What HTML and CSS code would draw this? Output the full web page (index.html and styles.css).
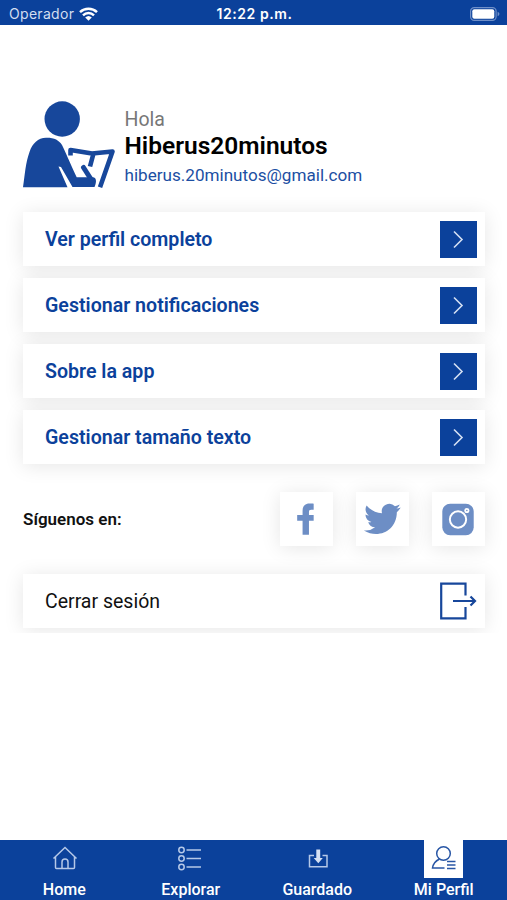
FILE: index.html
```html
<!DOCTYPE html>
<html lang="es">
<head>
    <meta charset="UTF-8">
    <meta name="viewport" content="width=device-width, initial-scale=1.0">
    <title>Mi Perfil</title>
    <link rel="stylesheet" href="styles.css">
</head>
<body>
    <header class="status-bar">
        <div class="carrier">
            <span>Operador</span>
            <svg class="wifi" viewBox="0 0 19 14" width="19" height="14">
                <path d="M1 5.2a12.3 12.3 0 0 1 17 0M4 8.3a8 8 0 0 1 11 0" fill="none" stroke="#fff" stroke-width="2.5"/>
                <path d="M6.2 10.5a4.8 4.8 0 0 1 6.6 0L9.5 13.8z" fill="#fff"/>
            </svg>
        </div>
        <span class="time">12:22 p.m.</span>
        <svg class="battery" viewBox="0 0 31 14" width="31" height="14">
            <rect x="1.6" y=".6" width="25.5" height="12.8" rx="3.6" fill="none" stroke="#6f8fc8" stroke-width="1.2"/>
            <rect x="3.3" y="2.3" width="22" height="9.4" rx="2" fill="#fff"/>
            <path d="M28.6 4.8c2.4.8 2.4 3.6 0 4.4z" fill="#6f8fc8"/>
        </svg>
    </header>

    <main class="content">
        <section class="profile">
            <svg class="avatar" viewBox="0 0 92 88" width="92" height="88">
                <circle cx="39.2" cy="18" r="17.7"/>
                <path d="M0 86.3C2 73 2.5 62 6.5 51 9.500 42 15 37 23 36.7c8-.2 13 2.3 16 7.3 3 6 8 18 14.7 32.2H70c3 0 4.2 4 1.500 9.8H49.500L38 66l-2.500-.5 9 20.8z"/>
                <path d="M47.5 54.500v-5.500l21.500 3.500 20.500-2L77 86.300M70.5 52.500l-3.500 13" class="book"/>
                <path d="M60.5 66.500l8 12.500" class="arm"/>
            </svg>
            <div class="profile-text">
                <p class="hello">Hola</p>
                <h1 class="name">Hiberus20minutos</h1>
                <p class="email">hiberus.20minutos@gmail.com</p>
            </div>
        </section>

        <nav class="options">
            <a class="card option">
                <span>Ver perfil completo</span>
                <svg class="arrow" viewBox="0 0 37 37"><path d="M14 10.500l8 8-8 8"/></svg>
            </a>
            <a class="card option">
                <span>Gestionar notificaciones</span>
                <svg class="arrow" viewBox="0 0 37 37"><path d="M14 10.500l8 8-8 8"/></svg>
            </a>
            <a class="card option">
                <span>Sobre la app</span>
                <svg class="arrow" viewBox="0 0 37 37"><path d="M14 10.500l8 8-8 8"/></svg>
            </a>
            <a class="card option">
                <span>Gestionar tamaño texto</span>
                <svg class="arrow" viewBox="0 0 37 37"><path d="M14 10.500l8 8-8 8"/></svg>
            </a>
        </nav>

        <section class="social">
            <h2 class="social-title">Síguenos en:</h2>
            <div class="social-links">
                <a class="card social-link">
                    <svg viewBox="0 0 54 54"><path d="M34.300 11v6h-2.500c-1.800 0-2.300.8-2.300 2.300v3h4.800v6h-4.800V42.500h-6.500V28.300H17.500v-6h5.500v-4c0-4.800 2.500-7.500 7-7.500 2 0 3.300.1 4.300.2z"/></svg>
                </a>
                <a class="card social-link">
                    <svg viewBox="0 0 54 54"><path d="M45.500 14.700c-1.400.6-2.800 1-4.300 1.200 1.600-1 2.700-2.300 3.300-4.100-1.500.9-3.100 1.500-4.800 1.800a7.700 7.700 0 0 0-13.200 7c-6.300-.3-11.900-3.300-15.700-7.900-2.200 3.900-.9 8 2.300 10.200-1.200 0-2.400-.4-3.400-.9 0 3.900 2.600 6.900 6.100 7.600-1.100.3-2.300.3-3.400.1 1 3 3.700 5.200 7.100 5.300A15.500 15.500 0 0 1 8 38.200c15 9 33.600.2 33.600-18.600 1.600-1.200 2.900-2.900 3.900-4.900z"/></svg>
                </a>
                <a class="card social-link">
                    <svg viewBox="0 0 54 54">
                        <rect x="10.500" y="11" width="32" height="32" rx="8"/>
                        <circle cx="26.500" cy="27" r="8.300" class="lens"/>
                        <circle cx="35.500" cy="17.800" r="2.600" fill="#fff"/>
                        <circle cx="35.500" cy="17.800" r=".8"/>
                    </svg>
                </a>
            </div>
        </section>

        <a class="card logout">
            <span>Cerrar sesión</span>
            <svg class="logout-icon" viewBox="0 0 37 38" width="37" height="38">
                <path d="M25.500 13.500V1.700H1.200v34.600h24.300V25M13 19h22M30.500 14.500L35 19l-4.500 4.500"/>
            </svg>
        </a>
    </main>

    <nav class="tab-bar">
        <a class="tab">
            <span class="tab-icon">
                <svg viewBox="0 0 39 38"><path d="M8.500 18.500L20 7.500l11.500 11M10.500 17v10.500q0 1 1 1h17q1 0 1-1V17M17 28.500v-6.500a3 3 0 0 1 6 0v6.500"/></svg>
            </span>
            <span class="tab-label">Home</span>
        </a>
        <a class="tab">
            <span class="tab-icon">
                <svg viewBox="0 0 39 38">
                    <circle cx="10.500" cy="10" r="2.700"/><circle cx="10.500" cy="18.500" r="2.700"/><circle cx="10.500" cy="27" r="2.700"/>
                    <path d="M15.500 10H30M15.500 18.500H30M15.500 27H30"/>
                </svg>
            </span>
            <span class="tab-label">Explorar</span>
        </a>
        <a class="tab">
            <span class="tab-icon">
                <svg viewBox="0 0 39 38">
                    <path d="M16 15.500H11.500v11.300h17.500V15.500H24.500"/>
                    <path d="M18.300 9.500h3.900v8.500h2.600l-4.500 5.200-4.600-5.200h2.600z" class="solid"/>
                </svg>
            </span>
            <span class="tab-label">Guardado</span>
        </a>
        <a class="tab active">
            <span class="tab-icon">
                <svg viewBox="0 0 39 38">
                    <circle cx="19.500" cy="13.500" r="6.800"/>
                    <path d="M15.500 19c-4 2-6.500 5-7 9h12M23 21.500h8.500M23 25h8.500M23 28.500h8.500"/>
                </svg>
            </span>
            <span class="tab-label">Mi Perfil</span>
        </a>
    </nav>
</body>
</html>
```
FILE: styles.css
```css
* {
    box-sizing: border-box;
}
body {
    margin: 0;
    height: 900px;
    display: flex;
    flex-direction: column;
    background: #fff;
    color: #111;
    font-family: Roboto, "Liberation Sans", sans-serif;
}
h1, h2, p {
    margin: 0;
}

/* Status bar */
.status-bar {
    height: 25px;
    padding: 2px 7px 0 9px;
    display: grid;
    grid-template-columns: 1fr auto 1fr;
    align-items: center;
    background: #0b419b;
    color: #fff;
    font-family: Inter, sans-serif;
    font-size: 14px;
}
.carrier {
    display: flex;
    align-items: center;
    gap: 5px;
    color: #d3def0;
    letter-spacing: 0.3px;
}
.time {
    font-weight: 600;
    letter-spacing: 0.55px;
}
.battery {
    justify-self: end;
}

/* Content */
.content {
    height: 608px;
    padding: 75px 22px 0 23px;
    overflow: hidden;
    isolation: isolate;
}
.profile {
    display: flex;
    gap: 9.5px;
    height: 112px;
}
.avatar {
    margin-top: 1px;
    fill: #17479b;
}
.avatar .book,
.avatar .arm {
    fill: none;
    stroke: #17479b;
    stroke-width: 4.6;
    stroke-linejoin: round;
}
.avatar .arm {
    stroke-width: 5;
    stroke-linecap: round;
}
.profile-text {
    padding-top: 7px;
}
.hello {
    font-size: 19.5px;
    line-height: 25px;
    color: #777;
}
.name {
    font-size: 24.5px;
    line-height: 28px;
    font-weight: 600;
    color: #000;
}
.email {
    margin-top: 3px;
    font-size: 17.1px;
    line-height: 24px;
    color: #1c4fa3;
}
.card {
    position: relative;
    height: 54px;
    display: flex;
    align-items: center;
    background: #fff;
}
/* shadow sits under every card, so neighbours stay white */
.card::before {
    content: "";
    position: absolute;
    inset: 0;
    z-index: -1;
    box-shadow: 0 2px 20px rgba(0, 0, 0, 0.1);
}
.options {
    display: flex;
    flex-direction: column;
    gap: 12px;
}
.option {
    justify-content: space-between;
    padding: 0 8px 0 22px;
    font-size: 19.6px;
    font-weight: 600;
    color: #0b419b;
}
.arrow {
    width: 37px;
    height: 37px;
    background: #0b419b;
    fill: none;
    stroke: #d5e0f3;
    stroke-width: 1.6;
}
.social {
    margin: 28px 0;
    display: flex;
    justify-content: space-between;
    align-items: center;
}
.social-title {
    font-size: 17px;
    font-weight: 600;
}
.social-links {
    display: flex;
    gap: 23px;
}
.social-link {
    width: 53px;
    fill: #6d8ec5;
}
.social-link .lens {
    fill: none;
    stroke: #fff;
    stroke-width: 2;
}
.logout {
    justify-content: space-between;
    padding: 0 8px 0 22px;
    font-size: 19.5px;
}
.logout-icon {
    fill: none;
    stroke: #17479b;
    stroke-width: 2.2;
}

/* Bottom tabs */
.tab-bar {
    margin-top: auto;
    height: 60px;
    padding-left: 1px;
    display: grid;
    grid-template-columns: repeat(4, 1fr);
    background: #0b419b;
}
.tab {
    display: flex;
    flex-direction: column;
    align-items: center;
    color: #fff;
}
.tab-icon {
    width: 39px;
    height: 38px;
    fill: none;
    stroke: #b5c8e8;
    stroke-width: 1.5;
}
.tab-icon svg {
    display: block;
}
.tab-icon .solid {
    fill: #d5e0f3;
    stroke: none;
}
.tab-label {
    font-size: 16px;
    line-height: 24px;
    font-weight: 500;
}
.active .tab-icon {
    background: #fff;
    stroke: #2856a5;
}
```
